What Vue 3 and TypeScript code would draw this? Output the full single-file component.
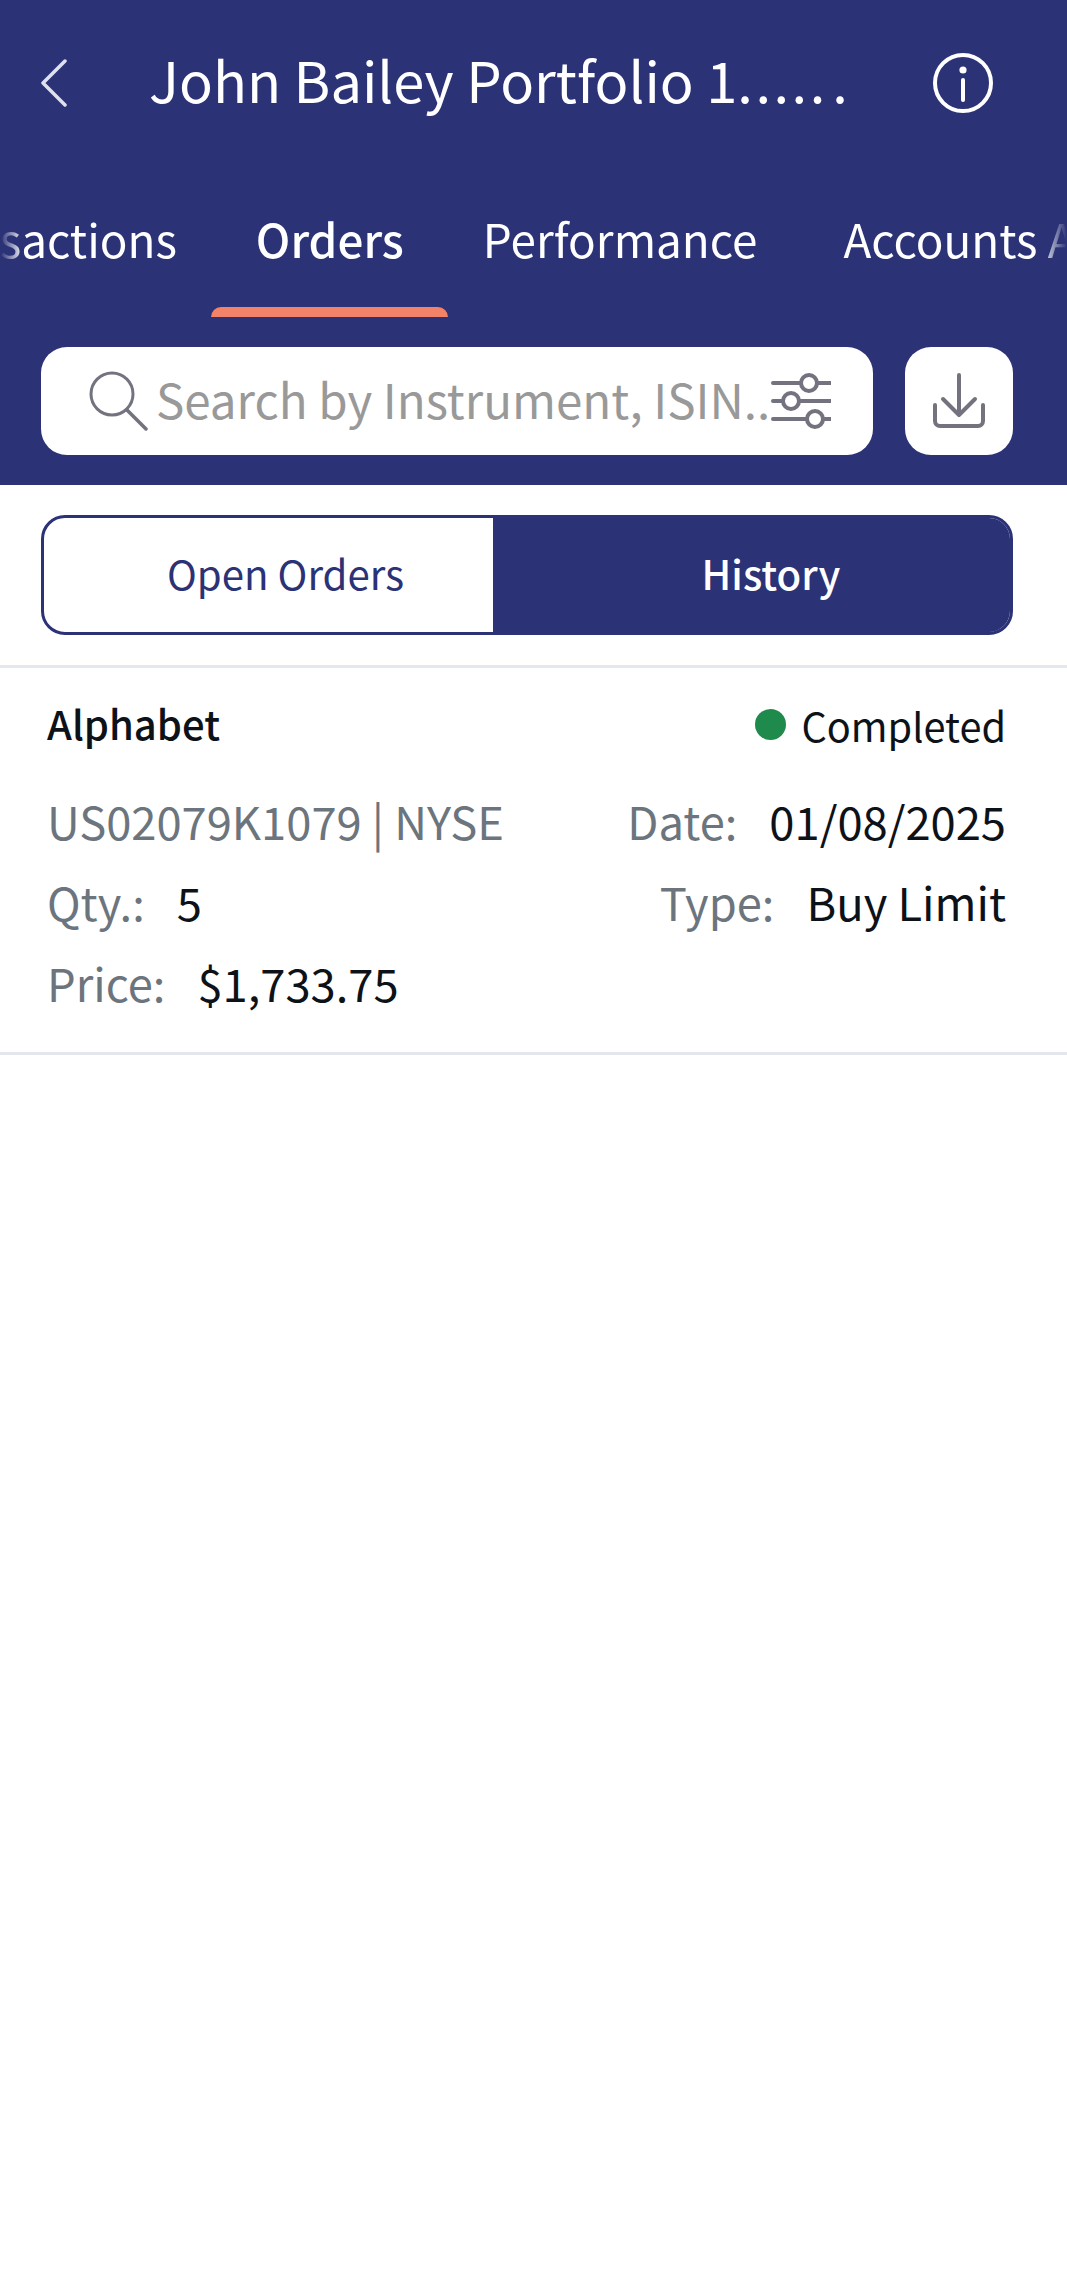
<script setup lang="ts">
import { ref } from 'vue'

interface OrderField {
  label: string
  value: string
}

const tabs = ['Transactions', 'Orders', 'Performance', 'Accounts A']
const activeTab = ref('Orders')
const search = ref('')
const mode = ref('History')

const leftFields: OrderField[] = [
  { label: 'Qty.:', value: '5' },
  { label: 'Price:', value: '$1,733.75' }
]
</script>

<template>
  <div class="page">
    <header class="header">
      <div class="top-bar">
        <svg class="back" width="28" height="48" viewBox="0 0 28 48" fill="none">
          <path d="M25 2 3 24l22 22" stroke="#dfe1ee" stroke-width="3.5" stroke-linecap="round" stroke-linejoin="round" />
        </svg>
        <h1 class="title">John Bailey Portfolio 1<span class="title-dots">....</span><span class="title-dots wide">..</span></h1>
        <svg class="info" width="60" height="60" viewBox="0 0 60 60" fill="none">
          <circle cx="30" cy="30" r="28" stroke="#fff" stroke-width="4" />
          <circle cx="30" cy="17" r="3.6" fill="#fff" />
          <path d="M30 27v20" stroke="#fff" stroke-width="4" stroke-linecap="round" />
        </svg>
      </div>

      <div class="tabs">
        <div class="tabs-track">
          <div v-for="tab in tabs" :key="tab" class="tab" :class="{ active: tab === activeTab }">
            {{ tab }}
          </div>
        </div>
      </div>

      <div class="search-row">
        <div class="search-box">
          <svg class="search-icon" width="60" height="60" viewBox="0 0 60 60" fill="none">
            <circle cx="23" cy="23" r="21" stroke="#73737f" stroke-width="3" />
            <path d="M38 39l19 19" stroke="#73737f" stroke-width="3.5" stroke-linecap="round" />
          </svg>
          <input v-model="search" class="search-input" type="text" placeholder="Search by Instrument, ISIN..." />
          <svg class="filter-icon" width="60" height="56" viewBox="0 0 60 56" fill="none">
            <g stroke="#73737f" stroke-width="4" stroke-linecap="round">
              <path d="M2 10h58M2 28h58M2 46h58" />
              <circle cx="38" cy="10" r="8" fill="#fff" />
              <circle cx="20" cy="28" r="8" fill="#fff" />
              <circle cx="44" cy="46" r="8" fill="#fff" />
            </g>
          </svg>
        </div>
        <button class="download" type="button">
          <svg width="56" height="56" viewBox="0 0 56 56" fill="none">
            <g stroke="#73737f" stroke-width="4" stroke-linecap="round" stroke-linejoin="round">
              <path d="M28 2v40M12 26l16 16 16-16" />
              <path d="M4 32v16a5 5 0 0 0 5 5h38a5 5 0 0 0 5-5V32" />
            </g>
          </svg>
        </button>
      </div>
    </header>

    <div class="segment-wrap">
      <div class="segment">
        <div class="segment-cell" :class="{ selected: mode === 'Open Orders' }">Open Orders</div>
        <div class="segment-cell" :class="{ selected: mode === 'History' }">History</div>
      </div>
    </div>

    <section class="order">
      <div class="order-head">
        <span class="order-name">Alphabet</span>
        <span class="status"><i class="status-dot"></i>Completed</span>
      </div>
      <div class="order-body">
        <div class="col">
          <div class="line muted">US02079K1079 | NYSE</div>
          <div v-for="field in leftFields" :key="field.label" class="line">
            <span class="muted">{{ field.label }}</span>
            <span class="value">{{ field.value }}</span>
          </div>
        </div>
        <div class="col col-right">
          <div class="line"><span class="muted">Date:</span><span class="value">01/08/2025</span></div>
          <div class="line"><span class="muted">Type:</span><span class="value">Buy Limit</span></div>
        </div>
      </div>
    </section>
  </div>
</template>

<style>
html,
body {
  margin: 0;
  background: #fff;
}
</style>

<style scoped>
.page {
  min-height: 2291px;
  background: #fff;
  font-family: "Noto Sans CJK SC", "Noto Sans", sans-serif;
  color: #0d1218;
}

/* Header */
.header {
  height: 485px;
  box-sizing: border-box;
  padding-top: 53px;
  background: #2b3276;
  color: #fff;
  overflow: hidden;
}

.top-bar {
  display: flex;
  align-items: center;
  height: 60px;
  padding: 0 74px 0 40px;
}

.back {
  flex: none;
}

.title {
  flex: 1;
  margin: 0 0 8px 81px;
  font-size: 56px;
  font-weight: 400;
  line-height: 60px;
  white-space: nowrap;
}

.title-dots {
  letter-spacing: 2.5px;
}

.title-dots.wide {
  letter-spacing: 7px;
}

.info {
  flex: none;
}

/* Tabs */
.tabs {
  height: 144px;
  margin-top: 60px;
  overflow: hidden;
  -webkit-mask-image: linear-gradient(90deg, transparent 0, #000 24px, #000 1040px, transparent 1067px);
  mask-image: linear-gradient(90deg, transparent 0, #000 24px, #000 1040px, transparent 1067px);
}

.tabs-track {
  display: flex;
  width: max-content;
  margin-left: -135px;
}

.tab {
  position: relative;
  height: 144px;
  padding: 0 39.5px;
  font-size: 45.8px;
  line-height: 131px;
  white-space: nowrap;
}

.tab:last-child {
  margin-left: 7px;
}

.tab.active {
  font-weight: 500;
}

.tab.active::after {
  content: "";
  position: absolute;
  left: -5px;
  right: -5px;
  top: 134px;
  height: 10px;
  border-radius: 10px 10px 0 0;
  background: #f28268;
}

/* Search */
.search-row {
  display: flex;
  gap: 32px;
  margin-top: 30px;
  padding: 0 54px 0 41px;
}

.search-box {
  flex: 1;
  display: flex;
  align-items: center;
  height: 108px;
  padding: 0 42px 0 48px;
  box-sizing: border-box;
  border-radius: 26px;
  background: #fff;
}

.search-icon {
  flex: none;
  margin-right: 7px;
}

.search-input {
  flex: 1;
  min-width: 0;
  margin-bottom: 5px;
  padding: 0;
  border: 0;
  outline: 0;
  font: inherit;
  font-size: 47.5px;
  color: #0d1218;
  background: transparent;
}

.search-input::placeholder {
  color: #999;
  opacity: 1;
}

.filter-icon {
  flex: none;
}

.download {
  flex: none;
  display: flex;
  align-items: center;
  justify-content: center;
  width: 108px;
  height: 108px;
  padding: 0;
  border: 0;
  border-radius: 26px;
  background: #fff;
}

/* Segmented control */
.segment-wrap {
  padding: 30px 54px 30px 41px;
  border-bottom: 3px solid #e3e8ee;
}

.segment {
  display: flex;
  height: 120px;
  box-sizing: border-box;
  border: 3px solid #2b3276;
  border-radius: 24px;
  overflow: hidden;
}

.segment-cell {
  flex: 1;
  text-align: center;
  font-size: 40.2px;
  line-height: 110px;
  color: #2b3276;
}

.segment-cell.selected {
  text-indent: 5px;
  background: #2b3276;
  box-shadow: -34px 0 0 #2b3276;
  color: #fff;
  font-weight: 500;
}

/* Order row */
.order {
  padding: 31px 61px 29px 47px;
  border-bottom: 3px solid #e4e6ee;
}

.order-head {
  display: flex;
  align-items: center;
  justify-content: space-between;
  height: 48px;
}

.order-name {
  font-size: 40px;
  font-weight: 500;
}

.status {
  display: flex;
  align-items: center;
  gap: 15px;
  margin-top: 2px;
  font-size: 39.7px;
}

.status-dot {
  width: 31px;
  height: 31px;
  border-radius: 50%;
  background: #1e8a4c;
}

.order-body {
  display: flex;
  justify-content: space-between;
  margin-top: 33px;
}

.col-right {
  text-align: right;
}

.line {
  height: 81px;
  font-size: 45.3px;
  line-height: 81px;
  white-space: nowrap;
}

.muted {
  color: #6c757d;
}

.value {
  margin-left: 32px;
}
</style>
